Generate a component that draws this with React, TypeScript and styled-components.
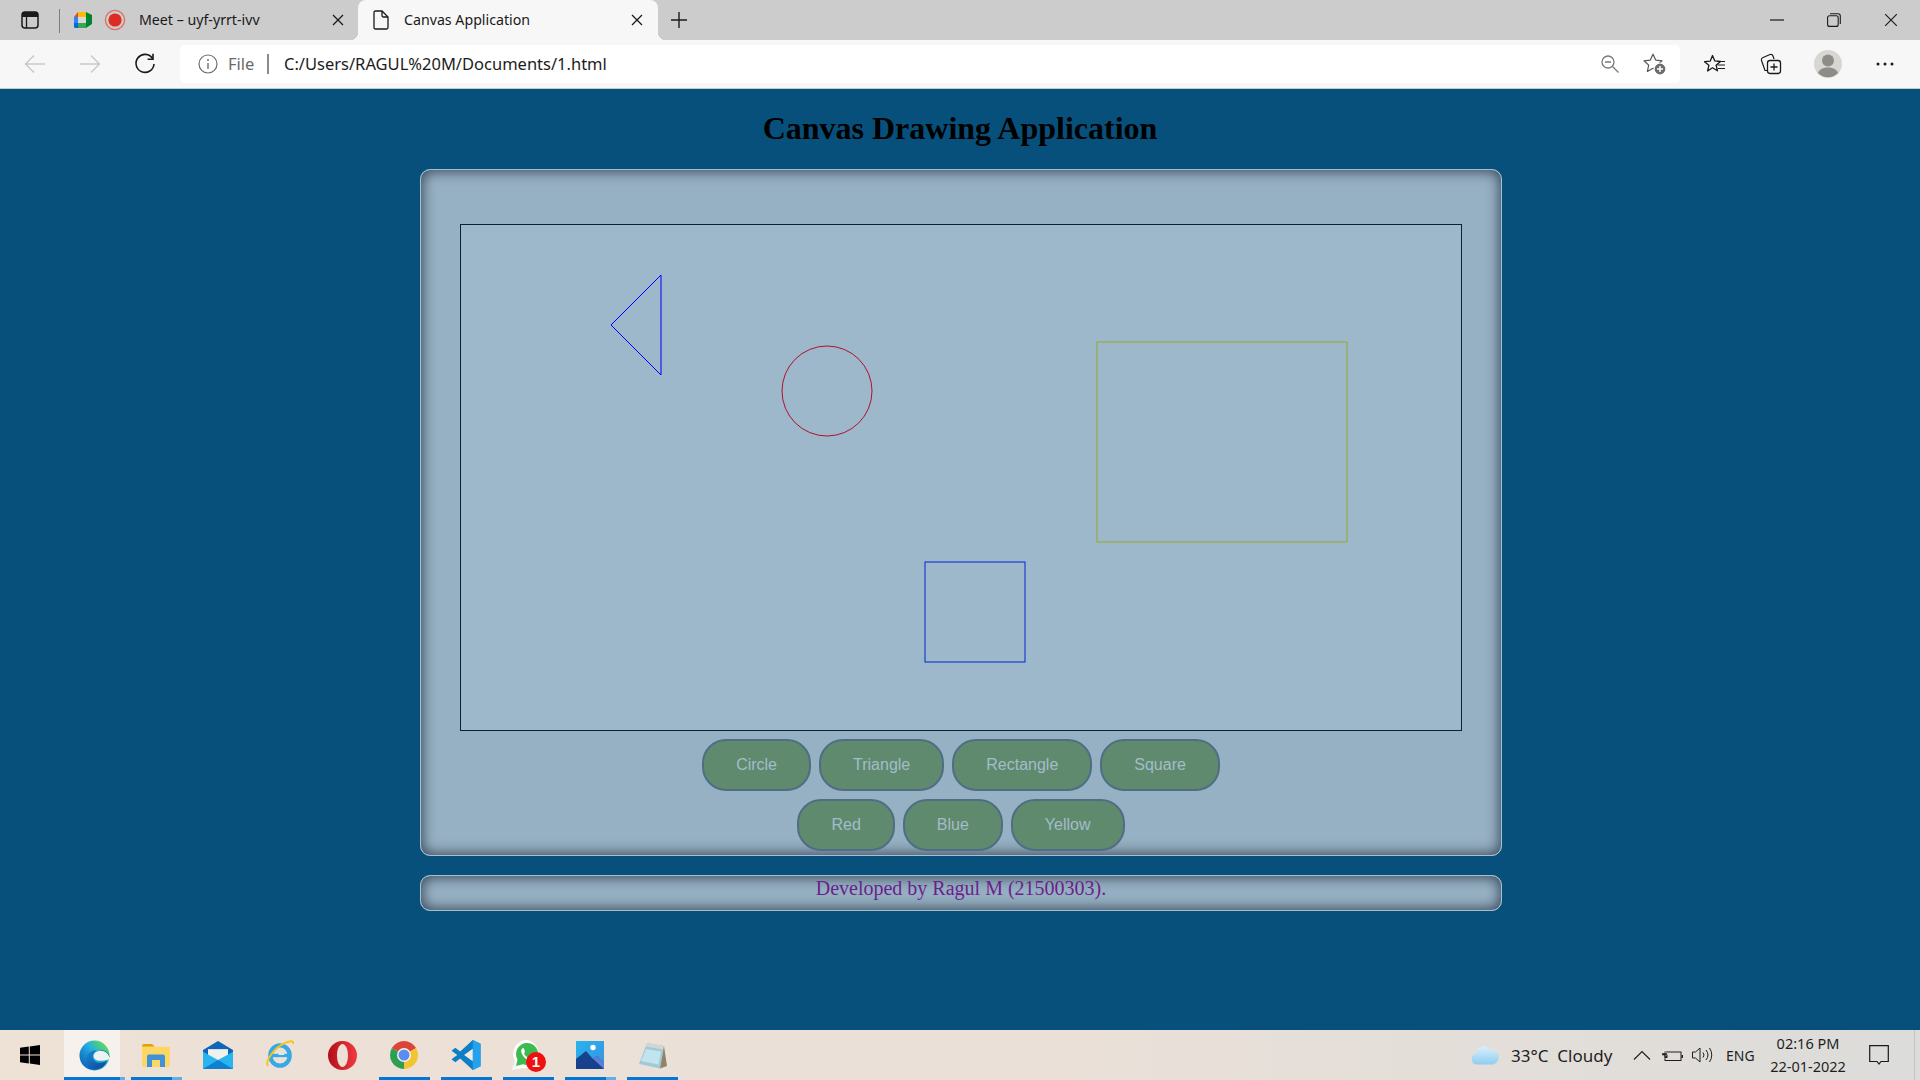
import React from "react";
import styled, { createGlobalStyle } from "styled-components";

const UI_FONT = `"Noto Sans", "Open Sans", sans-serif`;

const Global = createGlobalStyle`
  html, body { margin: 0; padding: 0; height: 100%; overflow: hidden; }
  #root { height: 100%; }
`;

const Screen = styled.div`
  height: 100vh;
  display: flex;
  flex-direction: column;
  font-family: ${UI_FONT};
`;

/* ---------- tab strip ---------- */
const TabStrip = styled.div`
  height: 40px;
  flex: none;
  display: flex;
  align-items: stretch;
  background: #cccccc;
  padding-left: 21px;
`;
const PanelSlot = styled.div`
  width: 18px;
  display: flex;
  align-items: center;
`;
const TabDivider = styled.div`
  width: 1px;
  height: 24px;
  align-self: center;
  margin: 2px 0 0 20px;
  background: #7f7f7f;
`;
const Tab = styled.div<{ $active?: boolean }>`
  position: relative;
  display: flex;
  align-items: center;
  box-sizing: border-box;
  width: ${(p) => (p.$active ? 300 : 298)}px;
  padding: ${(p) => (p.$active ? "0 15px 0 15px" : "0 14px 0 14px")};
  border-radius: 8px 8px 0 0;
  background: ${(p) => (p.$active ? "#f7f7f7" : "transparent")};
  font-size: 14.2px;
  color: #1a1a1a;
  white-space: nowrap;
  ${(p) =>
    p.$active &&
    `&::before, &::after {
      content: "";
      position: absolute;
      bottom: 0;
      width: 8px;
      height: 8px;
    }
    &::before { left: -8px; background: radial-gradient(circle at 0 0, transparent 8px, #f7f7f7 8.5px); }
    &::after { right: -8px; background: radial-gradient(circle at 100% 0, transparent 8px, #f7f7f7 8.5px); }`}
`;
const TabTitle = styled.span<{ $gap: number }>`
  margin: 0 0 2px ${(p) => p.$gap}px;
`;
const TabClose = styled.div`
  margin-left: auto;
  display: flex;
`;
const NewTab = styled.div`
  width: 20px;
  margin-left: 11px;
  display: flex;
  align-items: center;
  justify-content: center;
`;
const WindowControls = styled.div`
  margin-left: auto;
  display: flex;
`;
const WindowButton = styled.div`
  width: 57px;
  display: flex;
  align-items: center;
  justify-content: center;
  &:last-child { width: 58px; }
`;

/* ---------- toolbar ---------- */
const Toolbar = styled.div`
  height: 48px;
  flex: none;
  display: flex;
  align-items: center;
  box-sizing: content-box;
  background: #f7f7f7;
  border-bottom: 1px solid #c9c9c9;
  padding-left: 7px;
`;
const ToolSlot = styled.div<{ $w: number }>`
  width: ${(p) => p.$w}px;
  height: 38px;
  flex: none;
  display: flex;
  align-items: center;
  justify-content: center;
`;
const AddressBar = styled.div`
  width: 1500px;
  height: 38px;
  margin: 0 7px 0 8px;
  box-sizing: border-box;
  padding: 0 3px 0 18px;
  display: flex;
  align-items: center;
  background: #ffffff;
  border-radius: 5px;
`;
const FileLabel = styled.span`
  margin: 0 0 2px 10px;
  width: 30px;
  font-size: 16.5px;
  color: #6a6a6a;
`;
const AddressSep = styled.div`
  width: 2px;
  height: 20px;
  margin: 0 15px 0 9px;
  background: #8a8a8a;
`;
const Url = styled.span`
  margin-bottom: 2px;
  font-size: 16.5px;
  color: #1c1c1c;
  white-space: nowrap;
`;
const AddressActions = styled.div`
  margin-left: auto;
  display: flex;
`;

/* ---------- page ---------- */
const Page = styled.main`
  flex: 1;
  min-height: 0;
  background: #07507b;
  display: flex;
  flex-direction: column;
  align-items: center;
`;
const Heading = styled.h1`
  margin: 0;
  height: 80px;
  line-height: 79px;
  font-family: "Liberation Serif", serif;
  font-weight: 700;
  font-size: 32px;
  color: #000;
`;
const Panel = styled.section`
  width: 1082px;
  margin-left: 2px;
  box-sizing: border-box;
  border: 1px solid #a5bed0;
  border-radius: 10px;
  background: #97b1c4;
  box-shadow: inset 0 0 14px 1px rgba(30, 45, 60, 0.85);
`;
const CanvasWrap = styled.div`
  width: 1002px;
  box-sizing: border-box;
  margin: 54px auto 0;
  border: 1px solid #0a2236;
  background: #9cb8ca;
  line-height: 0;
`;
const ButtonRow = styled.div`
  display: flex;
  justify-content: center;
  gap: 8px;
  margin-top: 8px;
  &:last-child { margin-bottom: 4px; }
`;
const ActionButton = styled.button`
  height: 52px;
  padding: 0 32px;
  box-sizing: border-box;
  border: 2px solid #4f6e85;
  border-radius: 24px;
  background: #608a6e;
  color: #a3bccb;
  font-family: "Liberation Sans", sans-serif;
  font-size: 16px;
`;
const Footer = styled.footer`
  width: 1082px;
  height: 36px;
  margin: 19px 0 0 2px;
  box-sizing: border-box;
  border: 1px solid #a5bed0;
  border-radius: 10px;
  background: #97b1c4;
  box-shadow: inset 0 0 14px 1px rgba(30, 45, 60, 0.85);
  text-align: center;
  font-family: "Liberation Serif", serif;
  font-size: 20px;
  line-height: 25px;
  color: #6a1f8c;
`;

/* ---------- taskbar ---------- */
const Taskbar = styled.div`
  height: 50px;
  flex: none;
  display: flex;
  align-items: stretch;
  background: linear-gradient(90deg, #eee1d6 0%, #eae0d8 55%, #dcdcda 100%);
  color: #1f1f1f;
`;
const StartSlot = styled.div`
  width: 60px;
  margin-right: 3px;
  display: flex;
  align-items: center;
  justify-content: center;
`;
type Run = "none" | "single" | "multi" | "active";
const TaskItem = styled.div<{ $run: Run }>`
  position: relative;
  width: 62px;
  flex: none;
  display: flex;
  align-items: center;
  justify-content: center;
  ${(p) =>
    p.$run === "active" &&
    `&::before {
      content: ""; position: absolute; left: 1px; top: 0; bottom: 0; width: 56px;
      background: #f6f1ed;
    }`}
  ${(p) =>
    p.$run !== "none" &&
    `&::after {
      content: ""; position: absolute; bottom: 0; height: 3px;
      left: ${p.$run === "active" ? 1 : 6}px;
      width: ${p.$run === "active" ? 61 : 51}px;
      background: ${
        p.$run === "active"
          ? "linear-gradient(90deg,#0078d4 92%,#63aee6 92%)"
          : p.$run === "multi"
          ? "linear-gradient(90deg,#0078d4 80%,#63aee6 80%)"
          : "#0078d4"
      };
    }`}
  & > svg { position: relative; z-index: 1; }
`;
const IconStack = styled.div`
  position: relative;
  width: 32px;
  height: 36px;
  z-index: 1;
`;
const Badge = styled.span`
  position: absolute;
  right: -2px;
  bottom: 1px;
  width: 20px;
  height: 20px;
  border-radius: 50%;
  background: #f01010;
  color: #fff;
  font-family: "Liberation Sans", sans-serif;
  font-weight: 700;
  font-size: 15px;
  line-height: 20px;
  text-align: center;
`;
const Tray = styled.div`
  margin-left: auto;
  display: flex;
  align-items: center;
`;
const Weather = styled.span`
  width: 102px;
  margin-left: 12px;
  font-size: 17px;
  white-space: pre;
`;
const TraySlot = styled.div<{ $w: number; $ml?: number }>`
  width: ${(p) => p.$w}px;
  margin-left: ${(p) => p.$ml ?? 0}px;
  flex: none;
  display: flex;
  justify-content: center;
  align-items: center;
`;
const Lang = styled.span`
  width: 28px;
  margin-left: 9px;
  font-size: 14px;
  white-space: nowrap;
`;
const Clock = styled.div`
  width: 80px;
  margin-left: 14px;
  text-align: center;
  font-size: 14.5px;
  line-height: 23px;
  white-space: nowrap;
`;
const TrayEnd = styled.div`
  width: 5px;
  height: 100%;
  margin-left: 15px;
  border-left: 1px solid #c4c4c4;
`;

/* ---------- icons ---------- */
const s = { fill: "none", stroke: "currentColor" } as const;

const PanelIcon = () => (
  <svg width="18" height="18" viewBox="0 0 18 18" color="#1a1a1a">
    <rect x="1" y="1" width="16" height="16" rx="3" {...s} strokeWidth="1.5" />
    <path d="M1 2.5a1.5 1.5 0 0 1 1.5-1.5h13a1.5 1.5 0 0 1 1.5 1.5V6H1z" fill="#1a1a1a" />
    <path d="M5.5 6v11" {...s} strokeWidth="1.3" />
  </svg>
);
const MeetIcon = () => (
  <svg width="18" height="16" viewBox="0 0 18 16">
    <path d="M0 5h4v6H0z" fill="#2684fc" />
    <path d="M0 11h4v5H1.5A1.5 1.5 0 0 1 0 14.5z" fill="#0066da" />
    <path d="M4 11h8v5H4z" fill="#34a853" />
    <path d="M4 5h8v6H4z" fill="#fff" opacity=".25" />
    <path d="M12 0v16l6-4V3z" fill="#00832d" />
    <path d="M12 0v5H4V0z" fill="#fbbc04" />
    <path d="M4 0v5H0z" fill="#ea4335" />
  </svg>
);
const RecordIcon = () => (
  <svg width="22" height="22" viewBox="0 0 22 22" style={{ marginLeft: 12 }}>
    <circle cx="11" cy="11" r="9.6" fill="none" stroke="#e0726a" strokeWidth="1.4" />
    <circle cx="11" cy="11" r="6.6" fill="#dd2c22" />
  </svg>
);
const DocIcon = () => (
  <svg width="16" height="20" viewBox="0 0 16 20" color="#1a1a1a">
    <path d="M2.5 1h6.5l6 6v10.5a1.5 1.5 0 0 1-1.5 1.5h-11a1.5 1.5 0 0 1-1.5-1.5V2.5A1.5 1.5 0 0 1 2.5 1z" {...s} strokeWidth="1.3" />
    <path d="M9 1v4.5A1.5 1.5 0 0 0 10.5 7H15" {...s} strokeWidth="1.3" />
  </svg>
);
const CloseX = ({ size = 12, color = "#1a1a1a", w = 1.3 }: { size?: number; color?: string; w?: number }) => (
  <svg width={size} height={size} viewBox="0 0 12 12" color={color}>
    <path d="M1 1l10 10M11 1L1 11" {...s} strokeWidth={w} />
  </svg>
);
const PlusIcon = () => (
  <svg width="18" height="18" viewBox="0 0 18 18" color="#1a1a1a">
    <path d="M9 1v16M1 9h16" {...s} strokeWidth="1.4" />
  </svg>
);
const MinIcon = () => (
  <svg width="14" height="2" viewBox="0 0 14 2" color="#1a1a1a">
    <path d="M0 1h14" {...s} strokeWidth="1.2" />
  </svg>
);
const RestoreIcon = () => (
  <svg width="14" height="14" viewBox="0 0 14 14" color="#1a1a1a">
    <rect x=".6" y="2.8" width="10.6" height="10.6" rx="2" {...s} strokeWidth="1.1" />
    <path d="M3 .7h8a2.3 2.3 0 0 1 2.3 2.3v8" {...s} strokeWidth="1.1" />
  </svg>
);
const BackIcon = ({ flip }: { flip?: boolean }) => (
  <svg width="22" height="20" viewBox="0 0 22 20" color="#c9c9c9" style={flip ? { transform: "scaleX(-1)" } : undefined}>
    <path d="M1.5 10h19.5M10 1.5L1.5 10 10 18.5" {...s} strokeWidth="1.5" />
  </svg>
);
const RefreshIcon = () => (
  <svg width="22" height="22" viewBox="0 0 22 22" color="#1a1a1a">
    <path d="M18.6 5.5A9 9 0 1 0 20 11" {...s} strokeWidth="1.6" />
    <path d="M19 .8v5.4h-5.4" {...s} strokeWidth="1.6" />
  </svg>
);
const InfoIcon = () => (
  <svg width="20" height="20" viewBox="0 0 20 20" color="#6e6e6e">
    <circle cx="10" cy="10" r="9" {...s} strokeWidth="1.2" />
    <path d="M10 9v6" {...s} strokeWidth="1.4" />
    <circle cx="10" cy="6" r="1" fill="#6e6e6e" />
  </svg>
);
const ZoomOutIcon = () => (
  <svg width="18" height="18" viewBox="0 0 18 18" color="#7a7a7a">
    <circle cx="7" cy="7" r="6" {...s} strokeWidth="1.3" />
    <path d="M11.5 11.5L17.5 17.5M4 7h6" {...s} strokeWidth="1.3" />
  </svg>
);
const StarAddIcon = () => (
  <svg width="23" height="22" viewBox="0 0 23 22" color="#555">
    <path d="M10 1.200l2.700 5.900 6.300.7-4.700 4.300 1.300 6.300-5.600-3.200-5.600 3.200 1.300-6.300L1 7.800l6.300-.7z" {...s} strokeWidth="1.200" strokeLinejoin="round" />
    <circle cx="17" cy="16" r="6" fill="#6d6d6d" stroke="#ffffff" strokeWidth="1.200" />
    <path d="M17 13v6M14 16h6" stroke="#fff" strokeWidth="1.500" />
  </svg>
);
const FavIcon = () => (
  <svg width="22" height="20" viewBox="0 0 22 20" color="#1a1a1a">
    <path d="M8.500 1.500l2.300 5.400 5.700.5-4.400 3.800 1.400 5.600-5-3-4.900 3.200 1.300-5.700L.5 7.700l5.800-.6z" {...s} strokeWidth="1.300" strokeLinejoin="round" />
    <path d="M13 7.500h8M13.500 11h7.500M14 14.500h7" {...s} strokeWidth="1.200" />
  </svg>
);
const CollectionsIcon = () => (
  <svg width="22" height="22" viewBox="0 0 22 22" color="#1a1a1a">
    <path d="M7 17.500H5L1.500 7.500a2.400 2.400 0 0 1 1.600-3L10 1.500a2.400 2.400 0 0 1 3 1.500l1 3" {...s} strokeWidth="1.200" />
    <rect x="7.500" y="7.500" width="13" height="13" rx="2.400" {...s} strokeWidth="1.300" />
    <path d="M14 10.500v7M10.500 14h7" {...s} strokeWidth="1.300" />
  </svg>
);
const Avatar = () => (
  <svg width="28" height="28" viewBox="0 0 28 28">
    <circle cx="14" cy="14" r="14" fill="#d8d6d2" />
    <circle cx="14" cy="10.500" r="6" fill="#8f8b87" />
    <path d="M4 23c1.500-4 5.500-5.500 10-5.500S22.500 19 24 23a14 14 0 0 1-20 0z" fill="#8f8b87" />
  </svg>
);
const MoreIcon = () => (
  <svg width="18" height="4" viewBox="0 0 18 4">
    <circle cx="2" cy="2" r="1.500" fill="#1a1a1a" />
    <circle cx="9" cy="2" r="1.500" fill="#1a1a1a" />
    <circle cx="16" cy="2" r="1.500" fill="#1a1a1a" />
  </svg>
);

const WinLogo = () => (
  <svg width="20" height="20" viewBox="0 0 20 20" fill="#000">
    <path d="M0 2.800L8.800 1.600V9.500H0zM9.800 1.400L20 0v9.500H9.800zM0 10.500h8.800v7.900L0 17.200zM9.800 10.500H20V20L9.800 18.600z" />
  </svg>
);
const EdgeIcon = () => (
  <svg width="31" height="31" viewBox="0 0 32 32">
    <defs>
      <linearGradient id="eA" x1="0.15" y1="0.85" x2="0.9" y2="0.2">
        <stop offset="0" stopColor="#0c6cbf" />
        <stop offset=".55" stopColor="#23aee0" />
        <stop offset="1" stopColor="#5bd860" />
      </linearGradient>
      <linearGradient id="eB" x1="0" y1="0" x2="1" y2="1">
        <stop offset="0" stopColor="#1b8bd6" />
        <stop offset="1" stopColor="#0b3f8f" />
      </linearGradient>
    </defs>
    <circle cx="16" cy="16" r="15.500" fill="url(#eA)" />
    <path d="M31.500 17.500c-.8-4.500-4.800-7.200-9-7-4.500.2-8.500 3-8.500 7 0 3.500 3 6 7.500 6 3 0 5-.7 7.500-2-2 5-6.500 9-13 9-3 0-5-1-6-2-2-2-3-5-3-8 0-5 4-9 9-10z" fill="url(#eB)" />
    <path d="M31.500 19.500c0-5-4.500-8.500-9.500-8.500-4 0-7 2.500-7 5.500 0 3 2.500 5 6.500 5 3.500 0 7-1 10-2z" fill="#eef3f1" />
  </svg>
);
const FolderIcon = () => (
  <svg width="28" height="23" viewBox="0 0 28 26" preserveAspectRatio="none">
    <path d="M0 2a2 2 0 0 1 2-2h8l3 3H0z" fill="#e3a007" />
    <path d="M0 3h28v21a2 2 0 0 1-2 2H2a2 2 0 0 1-2-2z" fill="#fcd765" />
    <path d="M5 26V14a2 2 0 0 1 2-2h14a2 2 0 0 1 2 2v12h-5v-8h-8v8z" fill="#3f92d8" />
  </svg>
);
const MailIcon = () => (
  <svg width="30" height="28" viewBox="0 0 30 31" preserveAspectRatio="none">
    <path d="M0 10L15 0l15 10v3L15 22 0 13z" fill="#0f66b8" />
    <path d="M5 9h20v12H5z" fill="#f0f0f0" />
    <path d="M0 12l15 9 15-9v19H0z" fill="#28b4ee" />
    <path d="M0 31l15-10 15 10z" fill="#0f7fd0" />
  </svg>
);
const IeIcon = () => (
  <svg width="28" height="30" viewBox="0 0 29 31">
    <ellipse cx="14.500" cy="16" rx="10" ry="10.500" fill="none" stroke="#39a9e6" strokeWidth="4.500" />
    <path d="M6 16h17" stroke="#39a9e6" strokeWidth="3.500" />
    <path d="M13 14.500h6" stroke="#cfeefc" strokeWidth="2" />
    <path d="M2 27C-1 22 8 8 20 3c4-2 9-3 8 1" fill="none" stroke="#f5c518" strokeWidth="2" />
  </svg>
);
const OperaIcon = () => (
  <svg width="29" height="29" viewBox="0 0 29 29">
    <defs>
      <linearGradient id="opA" x1="0" y1="0" x2="1" y2="0">
        <stop offset="0" stopColor="#b30f1a" />
        <stop offset="1" stopColor="#f03a3f" />
      </linearGradient>
    </defs>
    <path fillRule="evenodd" d="M14.500 0a14.500 14.500 0 1 1 0 29 14.500 14.500 0 1 1 0-29zM14.500 3c-3 0-5.500 5-5.500 11.500S11.500 26 14.500 26s5.500-5 5.500-11.500S17.500 3 14.500 3z" fill="url(#opA)" />
  </svg>
);
const ChromeIcon = () => (
  <svg width="28" height="28" viewBox="0 0 28 28">
    <path d="M14 14L1.880 7A14 14 0 0 1 26.120 7z" fill="#db4437" />
    <path d="M14 14L26.120 7A14 14 0 0 1 14 28z" fill="#f4c430" />
    <path d="M14 14L14 28A14 14 0 0 1 1.880 7z" fill="#2f9e55" />
    <circle cx="14" cy="14" r="7" fill="#f0f0f0" />
    <circle cx="14" cy="14" r="5.500" fill="#5b8df0" />
  </svg>
);
const VsCodeIcon = () => (
  <svg width="30" height="30" viewBox="0 0 30 31">
    <path d="M22 0l8 4v23l-8 4-13-12-5 4-4-3 6-4.500L0 11l4-3 5 4z" fill="#0e7fc6" />
    <path d="M22 0l8 4v23l-8 4z" fill="#22a3ef" />
    <path d="M22 9l-9 6.500 9 6.500z" fill="#f1ebe4" />
  </svg>
);
const WhatsappGlyph = () => (
  <svg width="30" height="36" viewBox="0 0 30 36">
    <path d="M15 3a14 14 0 0 0-12 21L0 33l9.500-2A14 14 0 1 0 15 3z" fill="#fff" />
    <path d="M15 6a11 11 0 0 0-9.500 16.500L4 29l7-1.800A11 11 0 1 0 15 6z" fill="#3cbb4f" />
    <path d="M11 11c-2 1-2.500 3-1 6s4 5.500 7 6.500c2 .5 3.500-1 3.500-2.500l-3-1.500-1.200 1.200c-2-.7-3.500-2.300-4.300-4.200L13 15l-1-3.500z" fill="#fff" />
  </svg>
);
const PhotosIcon = () => (
  <svg width="28" height="28" viewBox="0 0 28 28">
    <defs>
      <linearGradient id="phA" x1="0" y1="0" x2="1" y2="1">
        <stop offset="0" stopColor="#27b4ee" />
        <stop offset="1" stopColor="#3d8fe0" />
      </linearGradient>
    </defs>
    <rect width="28" height="28" fill="url(#phA)" />
    <circle cx="17" cy="6.500" r="2.700" fill="#fff" />
    <path d="M0 28V18l10-8 7 8 4-3 7 7v6z" fill="#17418c" />
    <path d="M14 15l3 3 4-3 7 7v6z" fill="#5b7fd8" />
  </svg>
);
const NotepadIcon = () => (
  <svg width="29" height="27" viewBox="0 0 29 27">
    <path d="M9 1l17 3-4 22.500L1 22z" fill="#9fcbd9" />
    <path d="M9 1l17 3-.6 3.500L8 4.500z" fill="#d5d5d0" />
    <path d="M26 4l3 20-7 2.500z" fill="#8f8468" />
    <path d="M8 7l15 2.500-2.500 13L3 19z" fill="#c3e4ee" />
  </svg>
);
const CloudIcon = () => (
  <svg width="28" height="20" viewBox="0 0 28 20">
    <defs>
      <linearGradient id="cl" x1="0" y1="0" x2="0" y2="1">
        <stop offset="0" stopColor="#d9effb" />
        <stop offset="1" stopColor="#8fcdf0" />
      </linearGradient>
    </defs>
    <path d="M6 19.500a5.500 5.500 0 0 1-.8-10.900A7 7 0 0 1 18 4.500a6 6 0 0 1 4 15z" fill="url(#cl)" />
  </svg>
);
const ChevronIcon = () => (
  <svg width="18" height="10" viewBox="0 0 18 10" color="#1f1f1f">
    <path d="M1 9.500L9 1.500 17 9.500" {...s} strokeWidth="1.200" />
  </svg>
);
const BatteryIcon = () => (
  <svg width="21" height="13" viewBox="0 0 21 13" color="#1f1f1f">
    <rect x="3" y="3" width="16" height="8.500" {...s} strokeWidth="1" />
    <path d="M19.500 6v3h1.500V6zM3 5.500h2.500v3.500H3z" fill="#1f1f1f" />
    <path d="M1.500 0v4M3.500 0v4M0 4h5v2.500H3v3H2V6.500H0z" fill="#1f1f1f" stroke="#f0f0f0" strokeWidth=".3" />
  </svg>
);
const SpeakerIcon = () => (
  <svg width="21" height="16" viewBox="0 0 21 16" color="#1f1f1f">
    <path d="M.5 5h3L8 1v14l-4.500-4h-3z" {...s} strokeWidth="1" strokeLinejoin="round" />
    <path d="M11 5.500a4 4 0 0 1 0 5M14 3a8 8 0 0 1 0 10M17.500 1a12 12 0 0 1 0 14" {...s} strokeWidth="1" />
  </svg>
);
const NotifyIcon = () => (
  <svg width="20" height="20" viewBox="0 0 20 20" color="#1a1a1a">
    <path d="M.7.7h18.600v15.800h-7.300L10 19l-2-2.500H.7z" {...s} strokeWidth="1.200" />
  </svg>
);

const DrawingSurface = () => (
  <svg width="1000" height="505" viewBox="0 0 1000 505" fill="none">
    <path d="M200 50L150 100L200 150Z" stroke="#0000ff" />
    <circle cx="366" cy="166" r="45" stroke="#b01030" />
    <rect x="636" y="117" width="250" height="200" stroke="#96a82a" />
    <rect x="464" y="337" width="100" height="100" stroke="#0226d4" />
  </svg>
);

const shapes = ["Circle", "Triangle", "Rectangle", "Square"];
const colours = ["Red", "Blue", "Yellow"];

export default function App() {
  return (
    <Screen>
      <Global />
      <TabStrip>
        <PanelSlot>
          <PanelIcon />
        </PanelSlot>
        <TabDivider />
        <Tab>
          <MeetIcon />
          <RecordIcon />
          <TabTitle $gap={13}>Meet – uyf-yrrt-ivv</TabTitle>
          <TabClose>
            <CloseX />
          </TabClose>
        </Tab>
        <Tab $active>
          <DocIcon />
          <TabTitle $gap={15}>Canvas Application</TabTitle>
          <TabClose>
            <CloseX />
          </TabClose>
        </Tab>
        <NewTab>
          <PlusIcon />
        </NewTab>
        <WindowControls>
          <WindowButton>
            <MinIcon />
          </WindowButton>
          <WindowButton>
            <RestoreIcon />
          </WindowButton>
          <WindowButton>
            <CloseX size={14} w={1} />
          </WindowButton>
        </WindowControls>
      </TabStrip>
      <Toolbar>
        <ToolSlot $w={55}>
          <BackIcon />
        </ToolSlot>
        <ToolSlot $w={55}>
          <BackIcon flip />
        </ToolSlot>
        <ToolSlot $w={55}>
          <RefreshIcon />
        </ToolSlot>
        <AddressBar>
          <InfoIcon />
          <FileLabel>File</FileLabel>
          <AddressSep />
          <Url>C:/Users/RAGUL%20M/Documents/1.html</Url>
          <AddressActions>
            <ToolSlot $w={45}>
              <ZoomOutIcon />
            </ToolSlot>
            <ToolSlot $w={45}>
              <StarAddIcon />
            </ToolSlot>
          </AddressActions>
        </AddressBar>
        <ToolSlot $w={56}>
          <FavIcon />
        </ToolSlot>
        <ToolSlot $w={56}>
          <CollectionsIcon />
        </ToolSlot>
        <ToolSlot $w={58}>
          <Avatar />
        </ToolSlot>
        <ToolSlot $w={56}>
          <MoreIcon />
        </ToolSlot>
      </Toolbar>
      <Page>
        <Heading>Canvas Drawing Application</Heading>
        <Panel>
          <CanvasWrap>
            <DrawingSurface />
          </CanvasWrap>
          <ButtonRow>
            {shapes.map((t) => (
              <ActionButton key={t}>{t}</ActionButton>
            ))}
          </ButtonRow>
          <ButtonRow>
            {colours.map((t) => (
              <ActionButton key={t}>{t}</ActionButton>
            ))}
          </ButtonRow>
        </Panel>
        <Footer>Developed by Ragul M (21500303).</Footer>
      </Page>
      <Taskbar>
        <StartSlot>
          <WinLogo />
        </StartSlot>
        <TaskItem $run="active">
          <EdgeIcon />
        </TaskItem>
        <TaskItem $run="multi">
          <FolderIcon />
        </TaskItem>
        <TaskItem $run="none">
          <MailIcon />
        </TaskItem>
        <TaskItem $run="none">
          <IeIcon />
        </TaskItem>
        <TaskItem $run="none">
          <OperaIcon />
        </TaskItem>
        <TaskItem $run="single">
          <ChromeIcon />
        </TaskItem>
        <TaskItem $run="single">
          <VsCodeIcon />
        </TaskItem>
        <TaskItem $run="single">
          <IconStack>
            <WhatsappGlyph />
            <Badge>1</Badge>
          </IconStack>
        </TaskItem>
        <TaskItem $run="multi">
          <PhotosIcon />
        </TaskItem>
        <TaskItem $run="single">
          <NotepadIcon />
        </TaskItem>
        <Tray>
          <CloudIcon />
          <Weather>33°C  Cloudy</Weather>
          <TraySlot $w={24} $ml={17}>
            <ChevronIcon />
          </TraySlot>
          <TraySlot $w={30} $ml={3}>
            <BatteryIcon />
          </TraySlot>
          <TraySlot $w={30}>
            <SpeakerIcon />
          </TraySlot>
          <Lang>ENG</Lang>
          <Clock>
            02:16 PM
            <br />
            22-01-2022
          </Clock>
          <TraySlot $w={40} $ml={11}>
            <NotifyIcon />
          </TraySlot>
          <TrayEnd />
        </Tray>
      </Taskbar>
    </Screen>
  );
}
